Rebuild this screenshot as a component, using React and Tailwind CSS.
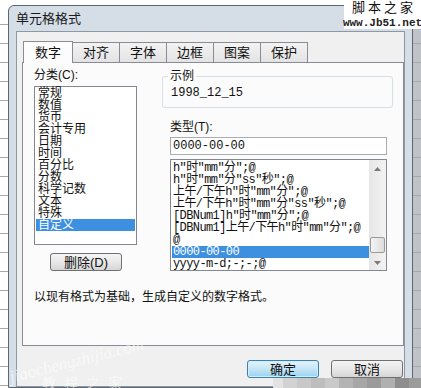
import React from "react";

const font = "font-['Liberation_Sans','Noto_Sans_CJK_SC',sans-serif]";
const mono = "font-['Liberation_Mono','Noto_Sans_CJK_SC',monospace]";

const categories = ["常规", "数值", "货币", "会计专用", "日期", "时间", "百分比", "分数", "科学记数", "文本", "特殊", "自定义"];

const formats = [
  'h"时"mm"分";@',
  'h"时"mm"分"ss"秒";@',
  '上午/下午h"时"mm"分";@',
  '上午/下午h"时"mm"分"ss"秒";@',
  '[DBNum1]h"时"mm"分";@',
  '[DBNum1]上午/下午h"时"mm"分";@',
  "@",
  "0000-00-00",
  "yyyy-m-d;-;-;@",
];

const tabs = ["数字", "对齐", "字体", "边框", "图案", "保护"];

function GridStrip({ className }) {
  const rows = Array.from({ length: 21 });
  return (
    <div className={className}>
      {rows.map((_, i) => (
        <div key={i} className="h-[19px] border-b border-[#a8a8a8]" />
      ))}
    </div>
  );
}

function Button({ children, primary }) {
  return (
    <div
      className={
        "flex h-[18px] items-center justify-center rounded-[3px] border text-[13px] leading-none text-[#111] " +
        (primary
          ? "w-[72px] border-[#3c7fb1] bg-gradient-to-b from-[#e5f4fc] via-[#c4e5f6] to-[#98d1ef] shadow-[inset_0_0_0_1px_#cfeefc]"
          : "w-[72px] border-[#707070] bg-gradient-to-b from-[#f4f4f4] via-[#e8e8e8] to-[#d6d6d6]")
      }
    >
      {children}
    </div>
  );
}

export default function App() {
  return (
    <div className={"relative flex h-[388px] w-[421px] overflow-hidden bg-white " + font}>
      <GridStrip className="w-[8px] pt-[6px]" />

      <div className="w-[405px] pt-[5px]">
        <div className="flex h-[383px] flex-col rounded-t-[6px] border border-[#5b6672] bg-[#d5dee7] px-[7px]">
          <div className="flex h-[25px] items-center text-[13px] text-[#1a1a1a]">单元格格式</div>

          <div className="flex-1 border border-[#8c98a4] bg-[#f0f0f0] pl-[5px] pt-[9px]">
            {/* tabs */}
            <div className="ml-[1px] flex h-[21px] items-end">
              {tabs.map((t, i) =>
                i === 0 ? (
                  <div
                    key={t}
                    className="relative z-10 -mb-px flex h-[22px] w-[50px] items-center justify-center border border-b-0 border-[#898c95] bg-[#fcfcfc] text-[13px] text-[#111]"
                  >
                    {t}
                  </div>
                ) : (
                  <div
                    key={t}
                    className="-ml-px flex h-[20px] w-[48px] items-center justify-center border border-b-0 border-[#898c95] bg-gradient-to-b from-[#f3f3f3] to-[#e3e3e3] text-[13px] text-[#111]"
                  >
                    {t}
                  </div>
                )
              )}
            </div>

            {/* panel */}
            <div className="flex h-[284px] w-[382px] flex-col border border-[#898c95] bg-[#fbfbfb] pl-[11px] text-[12px] text-[#111]">
              <div className="flex items-start">
                <div className="w-[103px] pt-[6px]">
                  <div className="h-[13px] leading-[13px]">分类(C):</div>
                  <div className="mt-[4px] h-[159px] border border-[#828790] bg-white">
                    {categories.map((c) => (
                      <div
                        key={c}
                        className={
                          "mx-[1px] h-[12px] pl-[2px] leading-[12px] " +
                          (c === "自定义" ? "bg-[#3d8fe0] text-white" : "")
                        }
                      >
                        {c}
                      </div>
                    ))}
                  </div>
                  <div className="ml-[16px] mt-[8px]">
                    <Button>删除(D)</Button>
                  </div>
                </div>

                <div className="ml-[25px] w-[232px] pt-[7px]">
                  <fieldset className="h-[38px] w-[231px] rounded-[3px] border border-[#d5dfe5] px-0">
                    <legend className="ml-[5px] px-[2px] text-[12px] leading-[13px]">示例</legend>
                    <div className={"mt-[4px] pl-[8px] text-[12px] leading-[12px] " + mono}>1998_12_15</div>
                  </fieldset>

                  <div className="ml-[8px] mt-[13px] h-[13px] leading-[13px]">类型(T):</div>
                  <div className={"ml-[8px] mt-[3px] flex h-[18px] w-[217px] items-center border border-[#abadb3] bg-white pl-[2px] text-[12px] " + mono}>
                    0000-00-00
                  </div>

                  <div className="ml-[8px] mt-[4px] flex h-[112px] w-[217px] border border-[#828790] bg-white">
                    <div className={"flex-1 pt-[2px] text-[12px] " + mono}>
                      {formats.map((f) => (
                        <div
                          key={f}
                          className={
                            "ml-[1px] h-[12px] whitespace-nowrap pl-[1px] leading-[12px] tracking-[-0.6px] " +
                            (f === "0000-00-00" ? "bg-[#3d8fe0] text-white" : "text-[#111]")
                          }
                        >
                          {f}
                        </div>
                      ))}
                    </div>
                    <div className="flex w-[17px] flex-col bg-gradient-to-r from-[#e6e6e6] to-[#f3f3f3]">
                      <div className="flex h-[17px] items-center justify-center">
                        <svg width="7" height="4" viewBox="0 0 7 4">
                          <path d="M0 4 L3.5 0 L7 4 Z" fill="#7a7a7a" />
                        </svg>
                      </div>
                      <div className="h-[60px]" />
                      <div className="mx-[1px] h-[16px] rounded-[2px] border border-[#9a9a9a] bg-gradient-to-r from-[#f4f4f4] to-[#dcdcdc]" />
                      <div className="flex-1" />
                      <div className="flex h-[14px] items-center justify-center">
                        <svg width="7" height="4" viewBox="0 0 7 4">
                          <path d="M0 0 L3.5 4 L7 0 Z" fill="#7a7a7a" />
                        </svg>
                      </div>
                    </div>
                  </div>
                </div>
              </div>

              <div className="mt-[20px] text-[12px] leading-[13px]">以现有格式为基础，生成自定义的数字格式。</div>
            </div>

            <div className="mr-[1px] mt-[14px] flex justify-end gap-[12px]">
              <Button primary>确定</Button>
              <Button>取消</Button>
            </div>
          </div>
        </div>
      </div>

      <GridStrip className="flex-1 bg-[#bfc2c6] pt-[6px]" />

      {/* watermark top right */}
      <div className="absolute right-0 top-0 flex h-[29px] w-[77px] flex-col items-center bg-white">
        <div className="pl-[3px] text-[13px] leading-[15px] tracking-[3px] text-[#111]">脚本之家</div>
        <div className={"mt-[2px] text-[11px] font-bold leading-[12px] text-[#222] " + mono}>www.Jb51.net</div>
      </div>

      {/* watermark bottom left */}
      <div className="pointer-events-none absolute left-[8px] top-[348px] -rotate-[14deg] font-['Liberation_Serif',serif] text-[17px] italic text-white/60">
        jiaochengzhijia.com
      </div>
      <div className="pointer-events-none absolute left-[42px] top-[373px] text-[14px] tracking-[8px] text-white/60">教程之家</div>

      {/* mosaic bottom right */}
      <div className="absolute bottom-0 right-0 flex h-[10px]">
        <div className="w-[10px] bg-[#e3e3e3]" />
        <div className="w-[14px] bg-[#d2d2d2]" />
        <div className="w-[14px] bg-[#c8c8c8]" />
        <div className="w-[14px] bg-[#bdbdbd]" />
        <div className="w-[14px] bg-[#c9c9c9]" />
        <div className="w-[14px] bg-[#b4b4b4]" />
        <div className="w-[14px] bg-[#a7a7a7]" />
        <div className="w-[14px] bg-[#9b9b9b]" />
        <div className="w-[14px] bg-[#b0b0b0]" />
        <div className="w-[14px] bg-[#8e8e8e]" />
        <div className="w-[12px] bg-[#9c9c9c]" />
      </div>
    </div>
  );
}
